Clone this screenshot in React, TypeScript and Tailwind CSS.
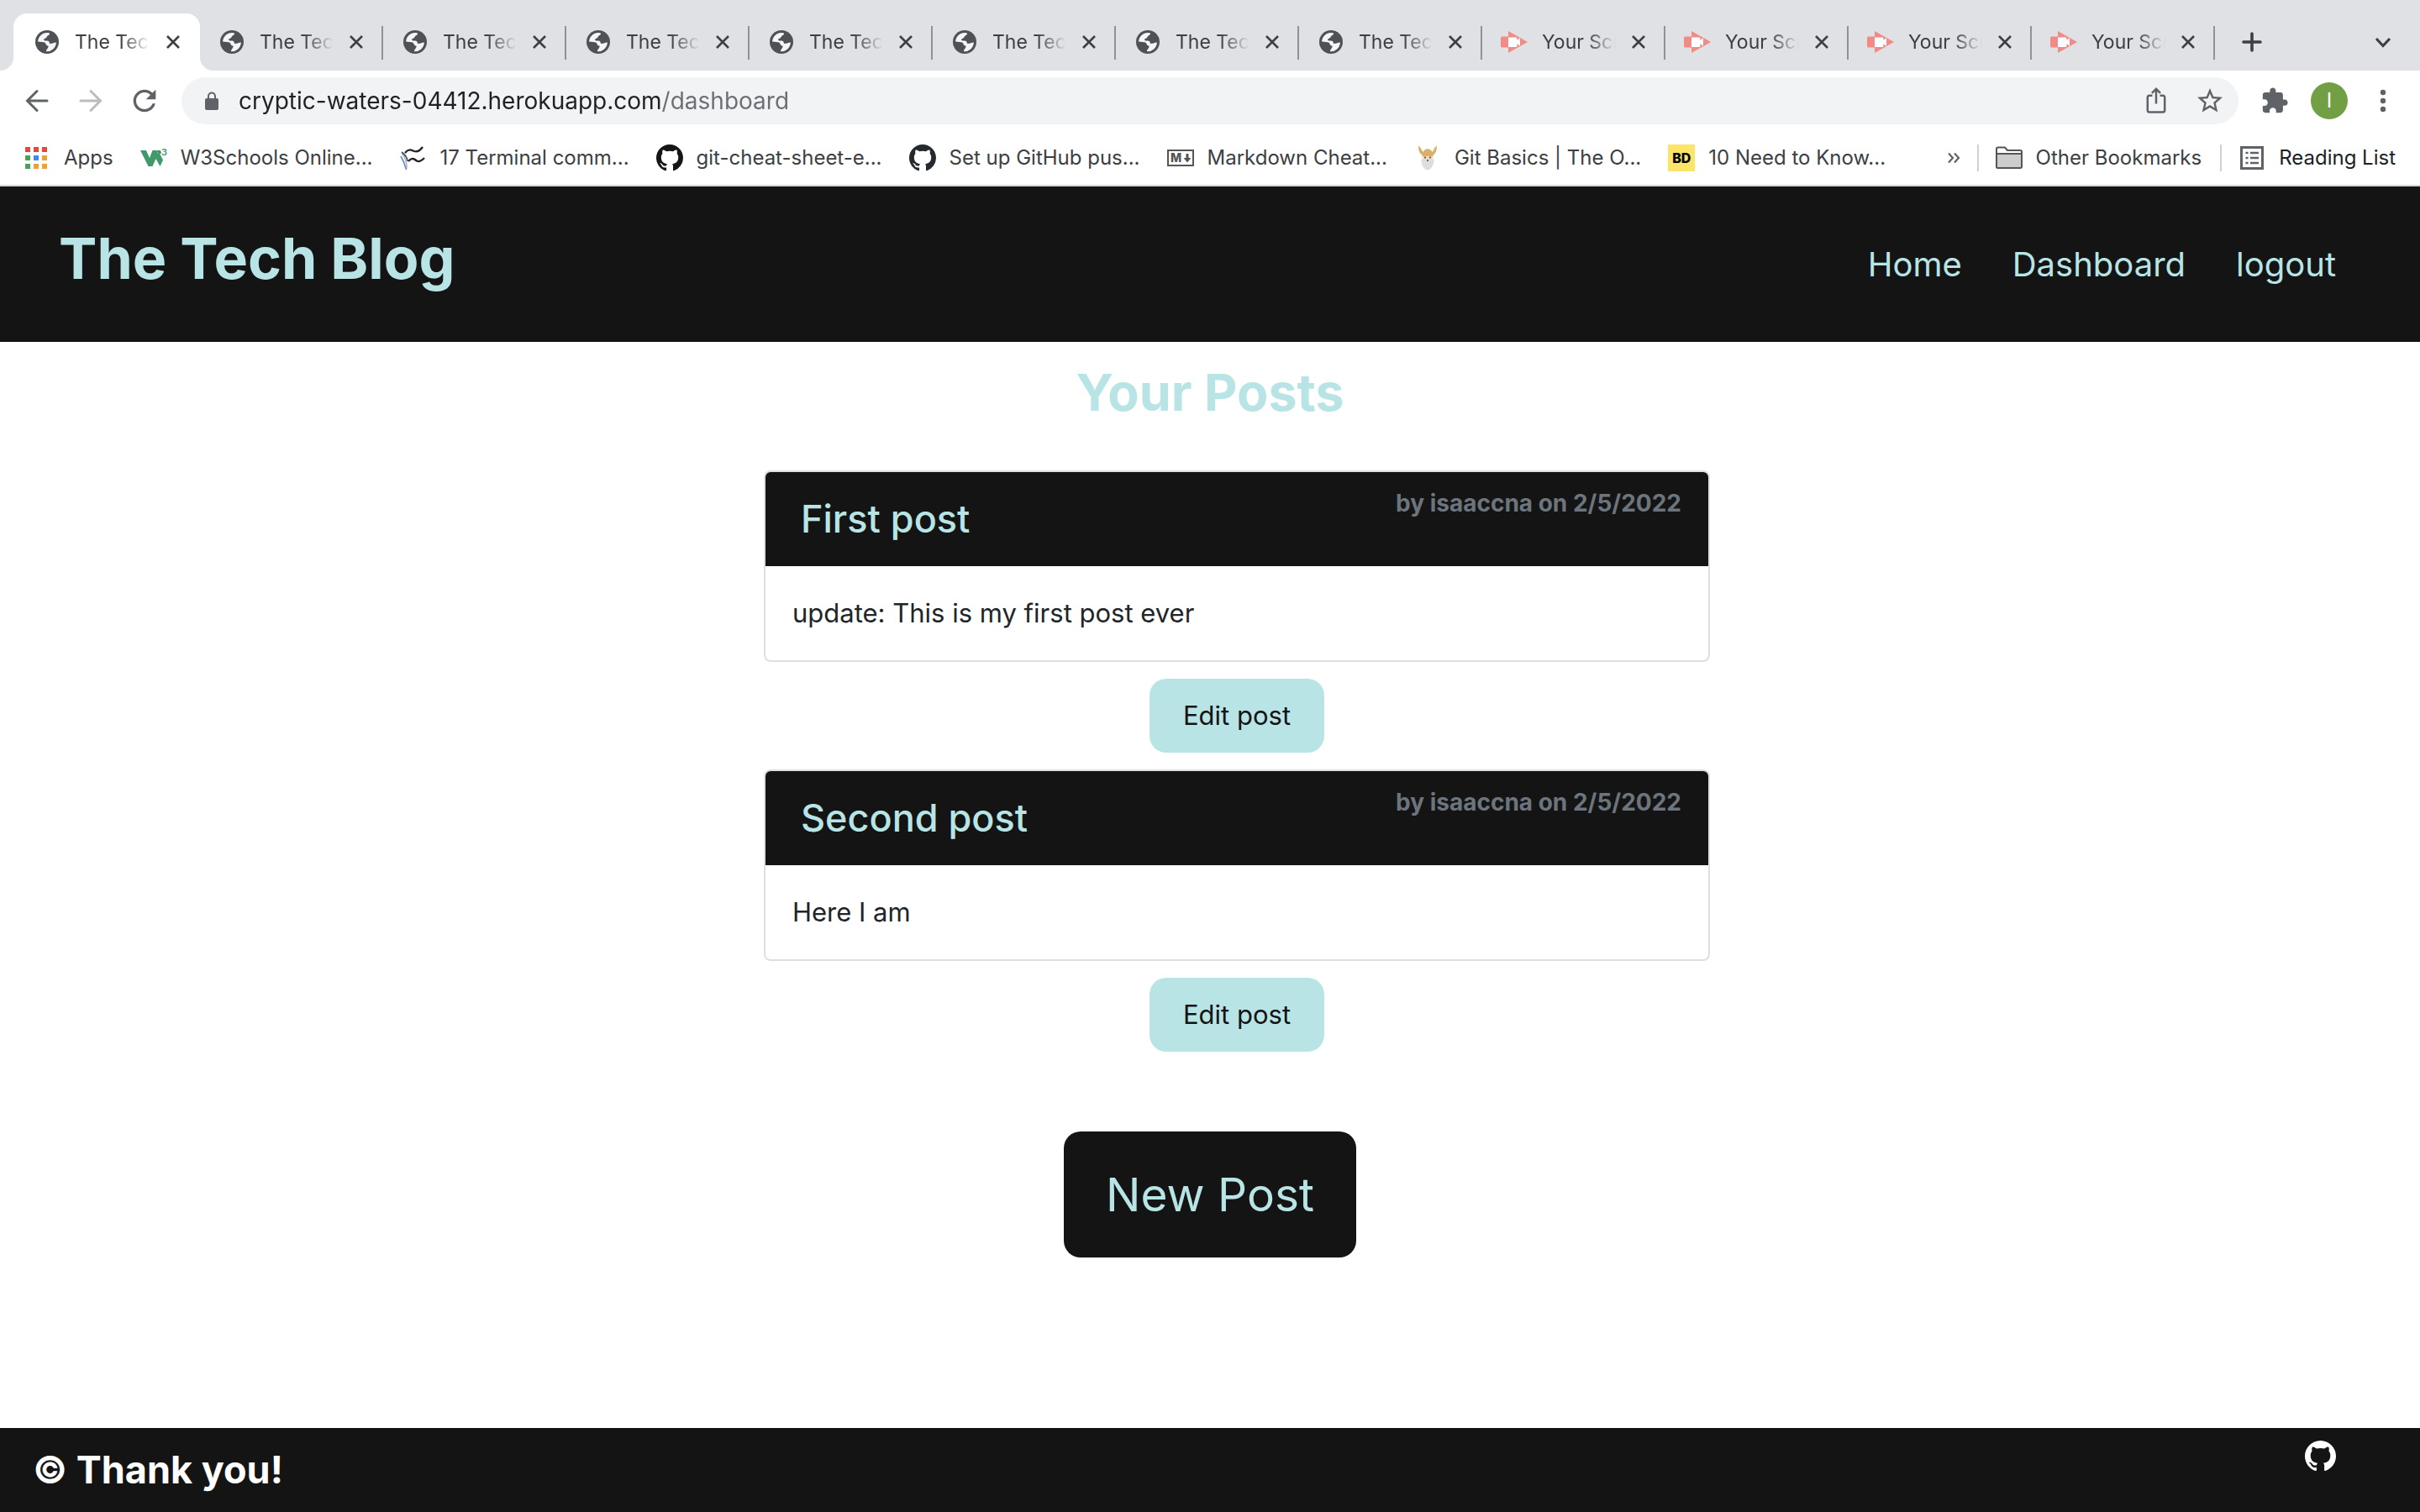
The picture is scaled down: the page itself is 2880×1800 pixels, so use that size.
import React, { useState } from "react";

const GITHUB_MARK =
  "M8 0C3.58 0 0 3.58 0 8c0 3.54 2.29 6.53 5.47 7.59.4.07.55-.17.55-.38 0-.19-.01-.82-.01-1.49-2.01.37-2.53-.49-2.69-.94-.09-.23-.48-.94-.82-1.13-.28-.15-.68-.52-.01-.53.63-.01 1.08.58 1.23.82.72 1.21 1.87.87 2.33.66.07-.52.28-.87.51-1.07-1.78-.2-3.64-.89-3.64-3.95 0-.87.31-1.59.82-2.15-.08-.2-.36-1.02.08-2.12 0 0 .67-.21 2.2.82.64-.18 1.32-.27 2-.27s1.36.09 2 .27c1.53-1.04 2.2-.82 2.2-.82.44 1.1.16 1.92.08 2.12.51.56.82 1.27.82 2.15 0 3.07-1.87 3.75-3.65 3.95.29.25.54.73.54 1.48 0 1.07-.01 1.93-.01 2.2 0 .21.15.46.55.38A8.01 8.01 0 0 0 16 8c0-4.42-3.58-8-8-8z";

function GithubIcon({ className }: { className: string }) {
  return (
    <svg viewBox="0 0 16 16" fill="currentColor" className={className} aria-hidden="true">
      <path d={GITHUB_MARK} />
    </svg>
  );
}

function GlobeIcon() {
  return (
    <svg viewBox="0 0 28 28" className="size-7 shrink-0" aria-hidden="true">
      <circle cx="14" cy="14" r="14" fill="#505156" />
      <path
        d="M16.5 3.2 C17.6 4.2 16.6 5.6 15 6.2 C13.6 6.8 13.9 8.8 12.2 9.4 C10.6 9.9 10 10.4 10.2 11.6 C10.4 12.8 12 12.6 14 12.6 C16.2 12.6 16.6 14 16.8 15.2 C17 16.2 18.4 15.8 19.6 15.8 C21.6 15.8 22.6 14.4 24.9 14.6 A11.2 11.2 0 0 1 13 25.2 C13.2 24 12.9 23.4 14 22.4 C15.4 21 15.6 19.8 15.6 18.6 C14 18.4 12.8 17.6 12.6 16.4 C12.2 14.8 10.4 14 8 14 L3 13.6 A11.2 11.2 0 0 1 16.5 3.2 Z"
        fill="#f4f5f7"
      />
    </svg>
  );
}

function RecorderIcon() {
  return (
    <svg viewBox="0 0 32 28" className="h-7 w-8 shrink-0" aria-hidden="true">
      <path d="M9 1 L32 14 L9 27 V20.500 H1.500 A1.500 1.500 0 0 1 0 19 V9 A1.500 1.500 0 0 1 1.500 7.500 H9 Z" fill="#f28b85" />
      <path d="M9 8.500 H18 A1.500 1.500 0 0 1 19.500 10 V12 L23 9 V19 L19.500 16 V18.500 A1.500 1.500 0 0 1 18 20 H9 Z" fill="#fff" />
    </svg>
  );
}

function CloseIcon() {
  return (
    <svg viewBox="0 0 16 16" className="size-4" stroke="#3c4043" strokeWidth="2.600" aria-hidden="true">
      <path d="M1 1 L15 15 M15 1 L1 15" />
    </svg>
  );
}

type TabProps = { title: string; kind: "globe" | "recorder"; active?: boolean };

function Tab({ title, kind, active = false }: TabProps) {
  return (
    <div
      className={
        active
          ? "relative flex h-[68px] w-[222px] min-w-0 items-center rounded-t-2xl bg-white pl-[26px] pr-6"
          : "relative flex h-[68px] w-[218px] min-w-0 items-center pl-6 pr-6"
      }
    >
      {active && (
        <>
          <span className="absolute -left-4 bottom-0 size-4 bg-[radial-gradient(circle_at_0_0,transparent_16px,white_16px)]" />
          <span className="absolute -right-4 bottom-0 size-4 bg-[radial-gradient(circle_at_100%_0,transparent_16px,white_16px)]" />
        </>
      )}
      <button
        type="button"
        role="tab"
        aria-selected={active}
        className={
          kind === "globe"
            ? "flex min-w-0 flex-1 items-center gap-[19px] text-left"
            : "-ml-0.5 flex min-w-0 flex-1 items-center gap-[17px] text-left"
        }
      >
        {kind === "globe" ? <GlobeIcon /> : <RecorderIcon />}
        <span className="min-w-0 flex-1 overflow-hidden whitespace-nowrap text-[23px] text-[#3c4043] [mask-image:linear-gradient(to_right,black_60%,transparent)]">
          {title}
        </span>
      </button>
      <button type="button" aria-label="Close tab" className="ml-[19px] shrink-0">
        <CloseIcon />
      </button>
      {!active && <span className="absolute right-0 top-[15px] h-10 w-0.5 bg-[#909297]" />}
    </div>
  );
}

const tabs: TabProps[] = [
  { title: "The Tech", kind: "globe", active: true },
  { title: "The Tech", kind: "globe" },
  { title: "The Tech", kind: "globe" },
  { title: "The Tech", kind: "globe" },
  { title: "The Tech", kind: "globe" },
  { title: "The Tech", kind: "globe" },
  { title: "The Tech", kind: "globe" },
  { title: "The Tech", kind: "globe" },
  { title: "Your Scr", kind: "recorder" },
  { title: "Your Scr", kind: "recorder" },
  { title: "Your Scr", kind: "recorder" },
  { title: "Your Scr", kind: "recorder" },
];

function TabStrip() {
  return (
    <div className="flex h-[84px] items-end bg-[#dfe1e5] pl-4">
      <div role="tablist" className="flex min-w-0">
        {tabs.map((tab, i) => (
          <Tab key={i} {...tab} />
        ))}
      </div>
      <button type="button" aria-label="New tab" className="flex h-[68px] items-center pl-8">
        <svg viewBox="0 0 24 24" className="size-6" stroke="#3c4043" strokeWidth="3.600" strokeLinecap="round" aria-hidden="true">
          <path d="M12 2 V22 M2 12 H22" />
        </svg>
      </button>
      <button type="button" aria-label="Search tabs" className="ml-auto flex h-[68px] items-center pr-8">
        <svg viewBox="0 0 24 24" className="size-6" fill="none" stroke="#3c4043" strokeWidth="3.200" aria-hidden="true">
          <path d="M4 8 L12 16.500 L20 8" />
        </svg>
      </button>
    </div>
  );
}

function Toolbar() {
  const [url, setUrl] = useState("cryptic-waters-04412.herokuapp.com/dashboard");
  return (
    <div className="flex h-[72px] items-center bg-white pl-7 pr-[30px] text-[#5f6368]">
      <button type="button" aria-label="Back">
        <svg viewBox="0 0 32 32" className="size-8" fill="none" stroke="currentColor" strokeWidth="3" strokeLinecap="round" aria-hidden="true">
          <path d="M28 16 H5 M16 4.500 L4.500 16 L16 27.500" />
        </svg>
      </button>
      <button type="button" aria-label="Forward" className="ml-8 text-[#babcbe]">
        <svg viewBox="0 0 32 32" className="size-8" fill="none" stroke="currentColor" strokeWidth="3" strokeLinecap="round" aria-hidden="true">
          <path d="M4 16 H27 M16 4.500 L27.500 16 L16 27.500" />
        </svg>
      </button>
      <button type="button" aria-label="Reload" className="ml-7">
        <svg viewBox="0 0 24 24" className="size-10" fill="currentColor" aria-hidden="true">
          <path d="M17.650 6.350C16.200 4.900 14.210 4 12 4c-4.420 0-7.990 3.580-7.990 8s3.570 8 7.990 8c3.730 0 6.840-2.550 7.730-6h-2.080c-.82 2.330-3.040 4-5.650 4-3.310 0-6-2.690-6-6s2.690-6 6-6c1.660 0 3.140.69 4.220 1.780L13 11h7V4l-2.350 2.350z" />
        </svg>
      </button>
      <div className="ml-6 flex h-14 min-w-0 flex-1 items-center rounded-full bg-[#f1f3f4] pl-7 pr-4">
        <svg viewBox="0 0 16 22" className="h-[22px] w-4 shrink-0" aria-hidden="true">
          <rect y="8" width="16" height="14" rx="2" fill="currentColor" />
          <path d="M4 9 V5.500 A4 4 0 0 1 12 5.500 V9" fill="none" stroke="currentColor" strokeWidth="2" />
        </svg>
        <input
          type="text"
          aria-label="Address and search bar"
          value={url}
          onChange={(e) => setUrl(e.target.value)}
          className="ml-6 min-w-0 flex-1 bg-[linear-gradient(90deg,#202124_502px,#6b6e72_502px)] bg-clip-text text-[28px] text-transparent caret-black outline-none"
        />
        <button type="button" aria-label="Share">
          <svg viewBox="0 0 24 30" className="h-[34px] w-7" fill="none" stroke="currentColor" strokeWidth="2.200" aria-hidden="true">
            <path d="M8 9.500 H5 A2 2 0 0 0 3 11.500 V25 A2 2 0 0 0 5 27 H19 A2 2 0 0 0 21 25 V11.500 A2 2 0 0 0 19 9.500 H16" />
            <path d="M12 18 V2.500 M7.500 7 L12 2.500 L16.500 7" />
          </svg>
        </button>
        <button type="button" aria-label="Bookmark this page" className="ml-8">
          <svg viewBox="0 0 24 24" className="size-9" fill="currentColor" aria-hidden="true">
            <path d="M22 9.240l-7.190-.62L12 2 9.190 8.630 2 9.240l5.460 4.730L5.820 21 12 17.270 18.180 21l-1.630-7.030L22 9.240zM12 15.400l-3.760 2.270 1-4.280-3.320-2.880 4.380-.38L12 6.100l1.710 4.040 4.380.38-3.320 2.880 1 4.280L12 15.400z" />
          </svg>
        </button>
      </div>
      <button type="button" aria-label="Extensions" className="ml-[26px]">
        <svg viewBox="0 0 24 24" className="size-[34px]" fill="currentColor" aria-hidden="true">
          <path d="M20.500 11H19V7c0-1.100-.9-2-2-2h-4V3.500C13 2.120 11.880 1 10.500 1S8 2.120 8 3.500V5H4c-1.100 0-1.990.9-1.990 2v3.800H3.500c1.490 0 2.700 1.210 2.700 2.700s-1.210 2.700-2.700 2.700H2V20c0 1.100.9 2 2 2h3.800v-1.500c0-1.490 1.210-2.700 2.700-2.700 1.490 0 2.700 1.210 2.700 2.700V22H17c1.100 0 2-.9 2-2v-4h1.500c1.380 0 2.500-1.120 2.500-2.500S21.880 11 20.500 11z" />
        </svg>
      </button>
      <button
        type="button"
        aria-label="Profile I"
        className="ml-[26px] flex size-11 items-center justify-center rounded-full bg-[#739f44] text-2xl text-white"
      >
        I
      </button>
      <button type="button" aria-label="Menu" className="ml-7">
        <svg viewBox="0 0 28 28" className="size-7" fill="currentColor" aria-hidden="true">
          <circle cx="14" cy="4" r="3.200" />
          <circle cx="14" cy="14" r="3.200" />
          <circle cx="14" cy="24" r="3.200" />
        </svg>
      </button>
    </div>
  );
}

function W3Icon() {
  return (
    <svg viewBox="0 0 32 32" className="size-8 shrink-0" aria-hidden="true">
      <path d="M0 7 H7 L11 16 L14.500 7 H19 L21 11 L24 12.500 L27 18.500 L23.500 26 L18.500 17 L14.500 26 H9.500 Z" fill="#41996b" />
      <path d="M19 7 H24 L25 10 L22.500 13 Z" fill="#41996b" />
      <text x="25" y="13" fontSize="11" fontWeight="600" fill="#41996b" fontFamily="Inter, sans-serif">3</text>
    </svg>
  );
}

function TerminalIcon() {
  return (
    <svg viewBox="0 0 32 32" className="size-8 shrink-0" fill="none" aria-hidden="true">
      <path d="M2 14 C5 19 7 24 8.500 30" stroke="#6f86b8" strokeWidth="1.600" />
      <path d="M3 10 C7 15 9.500 21 9 29" stroke="#9fb0d3" strokeWidth="1.400" />
      <path d="M3 9 C7 12 9.500 15 10 20" stroke="#4a4b4d" strokeWidth="1.600" />
      <path d="M7 10 C11 5 14 6 18 8 C22 9.500 25 7 28 3" stroke="#232323" strokeWidth="2.400" />
      <path d="M11 20 C15 15 18 17 21 19.500 C24 21.500 27 19 30 16" stroke="#232323" strokeWidth="2.400" />
    </svg>
  );
}

function MarkdownIcon() {
  return (
    <svg viewBox="0 0 32 32" className="size-8 shrink-0" aria-hidden="true">
      <rect x="1" y="7" width="30" height="18" fill="#fff" stroke="#555" strokeWidth="2" />
      <text x="4" y="21" fontSize="14" fontWeight="800" fill="#555" fontFamily="Inter, sans-serif">M</text>
      <path d="M22.500 11 H25.500 V16 H28.500 L24 21.500 L19.500 16 H22.500 Z" fill="#555" />
    </svg>
  );
}

function VikingIcon() {
  return (
    <svg viewBox="0 0 32 32" className="size-8 shrink-0" aria-hidden="true">
      <path d="M5 1 C6 3 8 3 8.500 6 L10.500 9 C13 4 19 4 21.500 9 L23.500 6 C24 3 26 3 27 1 C27 6 26 11 22.500 12.500 L22 17 H10 L9.500 12.500 C6 11 5 6 5 1 Z" fill="#d9b06a" />
      <path d="M10 14 H22 V18 H10 Z" fill="#ecd9c0" />
      <path d="M8.500 17 C11 19 13 17.500 16 17.500 C19 17.500 21 19 23.500 17 C24 23 21 30 16 30.500 C11 30 8 23 8.500 17 Z" fill="#dedede" />
      <circle cx="13" cy="15.500" r="1" fill="#444" />
      <circle cx="19" cy="15.500" r="1" fill="#444" />
      <circle cx="16" cy="19" r="1" fill="#444" />
    </svg>
  );
}

function BdIcon() {
  return (
    <span className="flex size-8 shrink-0 items-center justify-center bg-[#fbe569] text-base font-extrabold text-black" aria-hidden="true">
      BD
    </span>
  );
}

const appDots = [
  "bg-[#e8453c]", "bg-[#e8453c]", "bg-[#e8453c]",
  "bg-[#4f9f56]", "bg-[#4285f4]", "bg-[#e8a33a]",
  "bg-[#4f9f56]", "bg-[#e8a33a]", "bg-[#e8a33a]",
];

function AppsIcon() {
  return (
    <span className="grid grid-cols-3 gap-1" aria-hidden="true">
      {appDots.map((c, i) => (
        <span key={i} className={`size-1.5 ${c}`} />
      ))}
    </span>
  );
}

function Bookmark({ icon, children }: { icon: React.ReactNode; children: React.ReactNode }) {
  return (
    <a href="#" className="flex shrink-0 items-center gap-4 whitespace-nowrap">
      {icon}
      <span>{children}</span>
    </a>
  );
}

function BookmarksBar() {
  return (
    <nav
      aria-label="Bookmarks"
      className="flex h-[66px] items-center border-b-2 border-[#d3d5d8] bg-white pl-[30px] pr-[29px] text-2xl text-[#3c4043]"
    >
      <a href="#" className="flex items-center gap-5">
        <AppsIcon />
        <span>Apps</span>
      </a>
      <div className="ml-8 flex gap-8">
        <Bookmark icon={<W3Icon />}>W3Schools Online...</Bookmark>
        <Bookmark icon={<TerminalIcon />}>17 Terminal comm...</Bookmark>
        <Bookmark icon={<GithubIcon className="size-8 shrink-0 text-[#161514]" />}>git-cheat-sheet-e...</Bookmark>
        <Bookmark icon={<GithubIcon className="size-8 shrink-0 text-[#24292e]" />}>Set up GitHub pus...</Bookmark>
        <Bookmark icon={<MarkdownIcon />}>Markdown Cheat...</Bookmark>
        <Bookmark icon={<VikingIcon />}>Git Basics | The O...</Bookmark>
        <Bookmark icon={<BdIcon />}>10 Need to Know...</Bookmark>
      </div>
      <div className="ml-auto flex items-center">
        <button type="button" aria-label="More bookmarks">
          <svg viewBox="0 0 16 16" className="size-4" fill="none" stroke="#5f6368" strokeWidth="2.200" aria-hidden="true">
            <path d="M2 2.500 L7 8 L2 13.500 M9 2.500 L14 8 L9 13.500" />
          </svg>
        </button>
        <span className="ml-5 h-8 w-0.5 bg-[#cfd1d4]" />
        <a href="#" className="ml-5 flex items-center gap-4 whitespace-nowrap">
          <svg viewBox="0 0 32 28" className="h-7 w-8" aria-hidden="true">
            <path d="M1 3 A1.500 1.500 0 0 1 2.500 1.500 H11 L14 5 H29.500 A1.500 1.500 0 0 1 31 6.500 V9 H1 Z" fill="#fff" stroke="#555" strokeWidth="2" />
            <path d="M1 9 H31 V24.500 A1.500 1.500 0 0 1 29.500 26 H2.500 A1.500 1.500 0 0 1 1 24.500 Z" fill="#cdcdcd" stroke="#555" strokeWidth="2" />
          </svg>
          Other Bookmarks
        </a>
        <span className="ml-[22px] h-8 w-0.5 bg-[#cfd1d4]" />
        <a href="#" className="ml-[22px] flex items-center gap-[18px] whitespace-nowrap text-[#202124]">
          <svg viewBox="0 0 28 28" className="size-7" aria-hidden="true">
            <rect x="1.500" y="1.500" width="25" height="25" fill="#fff" stroke="#5f6368" strokeWidth="3" />
            <path d="M6.500 8 H9.500 M6.500 14 H9.500 M6.500 20 H9.500 M12 8 H22 M12 14 H22 M12 20 H22" stroke="#5f6368" strokeWidth="2.600" />
          </svg>
          Reading List
        </a>
      </div>
    </nav>
  );
}

const posts = [
  { title: "First post", meta: "by isaaccna on 2/5/2022", body: "update: This is my first post ever" },
  { title: "Second post", meta: "by isaaccna on 2/5/2022", body: "Here I am" },
];

function PostCard({ title, meta, body }: { title: string; meta: string; body: string }) {
  return (
    <li className="flex flex-col items-center">
      <article className="w-full overflow-hidden rounded-lg border-2 border-[#dfdfdf] bg-white">
        <header className="flex items-start justify-between bg-[#141414] px-8 py-4">
          <h3 className="px-2.5 py-2 text-[45px] leading-[64px] font-medium text-[#b8e4e6]">{title}</h3>
          <p className="text-[28px] leading-[42px] font-bold text-[#6c757d]">{meta}</p>
        </header>
        <p className="px-8 py-8 text-[31px] leading-[48px] text-[#212529]">{body}</p>
      </article>
      <button type="button" className="my-5 h-[88px] rounded-[20px] bg-[#b8e4e6] px-10 text-[31px] text-[#141414]">
        Edit post
      </button>
    </li>
  );
}

export default function App() {
  return (
    <div className="flex min-h-screen flex-col bg-white font-['Inter',sans-serif]">
      <TabStrip />
      <Toolbar />
      <BookmarksBar />

      <header className="flex h-[185px] items-center justify-between bg-[#141414] pl-[70px] pr-[100px] text-[#b8e4e6]">
        <h1 className="pb-4 text-[68px] leading-none font-bold">The Tech Blog</h1>
        <nav aria-label="Site" className="flex gap-[60px] text-[40px]">
          <a href="#">Home</a>
          <a href="#">Dashboard</a>
          <a href="#">logout</a>
        </nav>
      </header>

      <main className="flex flex-col items-center px-3">
        <h2 className="mt-5 text-[61px] leading-[80px] font-bold text-[#b8e4e6]">Your Posts</h2>
        <ul className="mt-[53px] w-5/12 pl-16">
          {posts.map((post) => (
            <PostCard key={post.title} {...post} />
          ))}
        </ul>
        <button type="button" className="mt-[75px] h-[150px] rounded-[20px] bg-[#141414] px-[50px] text-[55px] text-[#b8e4e6]">
          New Post
        </button>
      </main>

      <footer className="mt-auto flex h-[100px] items-center justify-between bg-[#141414] pl-[39px] pr-[100px] text-white">
        <p className="text-[45px] font-bold">© Thank you!</p>
        <a href="#" aria-label="GitHub" className="mt-[15px] self-start">
          <GithubIcon className="size-[37px]" />
        </a>
      </footer>
    </div>
  );
}
